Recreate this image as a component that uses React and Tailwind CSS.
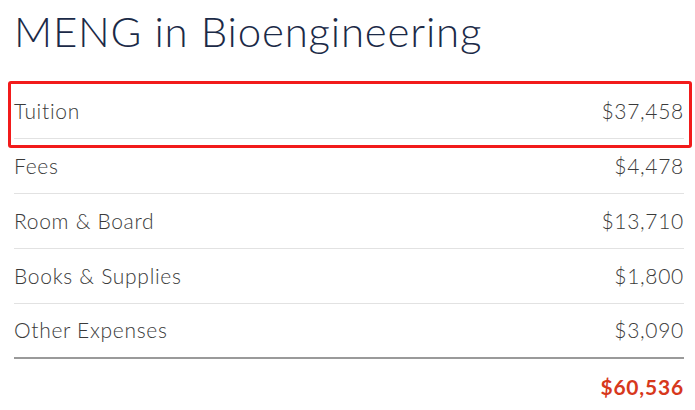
export default function App() {
  const rows = [
    ["Tuition", "$37,458"],
    ["Fees", "$4,478"],
    ["Room & Board", "$13,710"],
    ["Books & Supplies", "$1,800"],
    ["Other Expenses", "$3,090"],
  ];
  return (
    <div className="w-[695px] h-[410px] bg-white overflow-hidden pl-[14px] pr-[11px]" style={{ fontFamily: "Lato, 'Noto Sans', sans-serif" }}>
      <h1 className="h-[84px] pt-[2px] text-[42px] leading-[58px] font-light text-[#1b2a47] tracking-[0.8px]">MENG in Bioengineering</h1>
      <div className="relative">
        {rows.map(([label, value], i) => (
          <div
            key={label}
            className={`flex items-center justify-between h-[55px] pb-px text-[21px] font-light tracking-[0.7px] text-[#3a3a3a] ${i === rows.length - 1 ? "border-b-2 border-[#9a9a9a] h-[54px]" : "border-b border-[#e2e2e2]"}`}
          >
            <span>{label}</span>
            <span>{value}</span>
          </div>
        ))}
        <div className="flex justify-end items-center h-[55px] text-[21px] font-bold tracking-[0.8px] text-[#d7381c]">$60,536</div>
        <div className="absolute left-[-6px] top-[-3px] w-[684px] h-[67px] border-[3px] border-[#f21b1b] rounded-[3px]" />
      </div>
    </div>
  );
}
